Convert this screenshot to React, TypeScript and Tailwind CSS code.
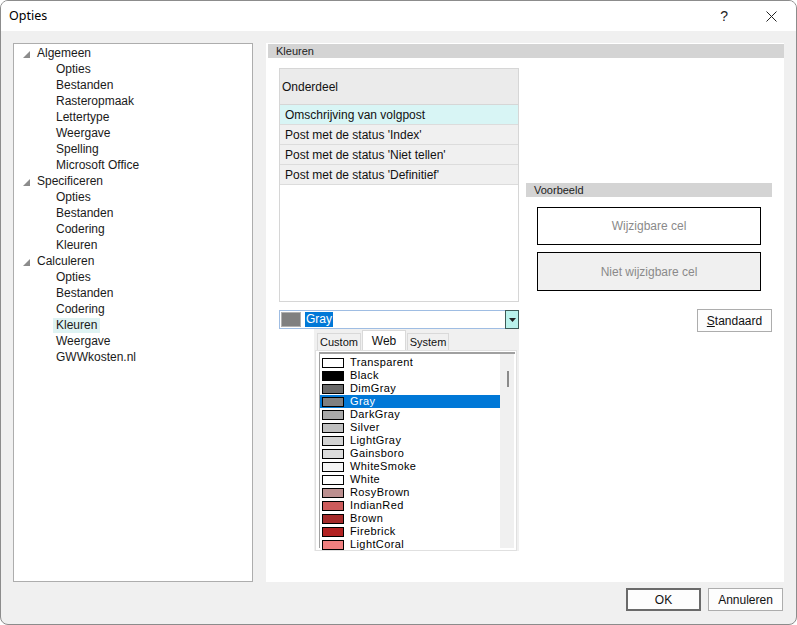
import React from 'react'

type TreeItem = { label: string; level: 0 | 1; selected?: boolean }

const TREE: TreeItem[] = [
  { label: 'Algemeen', level: 0 },
  { label: 'Opties', level: 1 },
  { label: 'Bestanden', level: 1 },
  { label: 'Rasteropmaak', level: 1 },
  { label: 'Lettertype', level: 1 },
  { label: 'Weergave', level: 1 },
  { label: 'Spelling', level: 1 },
  { label: 'Microsoft Office', level: 1 },
  { label: 'Specificeren', level: 0 },
  { label: 'Opties', level: 1 },
  { label: 'Bestanden', level: 1 },
  { label: 'Codering', level: 1 },
  { label: 'Kleuren', level: 1 },
  { label: 'Calculeren', level: 0 },
  { label: 'Opties', level: 1 },
  { label: 'Bestanden', level: 1 },
  { label: 'Codering', level: 1 },
  { label: 'Kleuren', level: 1, selected: true },
  { label: 'Weergave', level: 1 },
  { label: 'GWWkosten.nl', level: 1 },
]

const ROWS = [
  "Omschrijving van volgpost",
  "Post met de status 'Index'",
  "Post met de status 'Niet tellen'",
  "Post met de status 'Definitief'",
]

const COLORS: { name: string; hex: string }[] = [
  { name: 'Transparent', hex: '#ffffff' },
  { name: 'Black', hex: '#000000' },
  { name: 'DimGray', hex: '#696969' },
  { name: 'Gray', hex: '#808080' },
  { name: 'DarkGray', hex: '#a9a9a9' },
  { name: 'Silver', hex: '#c0c0c0' },
  { name: 'LightGray', hex: '#d3d3d3' },
  { name: 'Gainsboro', hex: '#dcdcdc' },
  { name: 'WhiteSmoke', hex: '#f5f5f5' },
  { name: 'White', hex: '#ffffff' },
  { name: 'RosyBrown', hex: '#bc8f8f' },
  { name: 'IndianRed', hex: '#cd5c5c' },
  { name: 'Brown', hex: '#a52a2a' },
  { name: 'Firebrick', hex: '#b22222' },
  { name: 'LightCoral', hex: '#f08080' },
]

function Tree() {
  return (
    <div className="w-[240px] h-[539px] bg-white border border-[#adadad] pt-[1px]">
      {TREE.map((item, i) => (
        <div key={i} className="h-[16px] flex items-center">
          {item.level === 0 ? (
            <>
              <svg width="7" height="7" viewBox="0 0 7 7" className="ml-[9px] mt-[2px]">
                <path d="M7 0 L7 7 L0 7 Z" fill="#8c8c8c" />
              </svg>
              <span className="ml-[7px] text-[12px] text-[#1a1a1a]">{item.label}</span>
            </>
          ) : (
            <span
              className={`ml-[39px] px-[3px] leading-[15px] text-[12px] text-[#1a1a1a] ${
                item.selected ? 'bg-[#dff3f3]' : ''
              }`}
            >
              {item.label}
            </span>
          )}
        </div>
      ))}
    </div>
  )
}

function SectionHeader({ label }: { label: string }) {
  return (
    <div className="h-[14px] bg-[#d4d4d4] pl-[8px] text-[11px] leading-[14px] text-[#222]">
      {label}
    </div>
  )
}

function ColorGrid() {
  return (
    <div className="w-[240px] h-[234px] bg-white border border-[#d6d6d6]">
      <div className="h-[36px] bg-[#ebebeb] border-b border-[#d6d6d6] flex items-center pl-[2px] text-[12px] text-[#111]">
        Onderdeel
      </div>
      {ROWS.map((r, i) => (
        <div
          key={r}
          className={`h-[20px] border-b border-[#dcdcdc] flex items-center pl-[5px] text-[12px] text-[#111] ${
            i === 0 ? 'bg-[#d8f5f5]' : 'bg-[#f0f0f0]'
          }`}
        >
          {r}
        </div>
      ))}
    </div>
  )
}

function ColorCombo() {
  return (
    <div className="mt-[8px] w-[240px] h-[19px] bg-white border border-[#9fbde3] flex items-center">
      <div className="ml-[1px] w-[20px] h-[15px] bg-[#808080] border border-[#b0b0b0]" />
      <span className="ml-[4px] bg-[#0078d7] text-white text-[12px] leading-[15px] px-[1px]">Gray</span>
      <div className="ml-auto w-[14px] h-[19px] -mr-[1px] bg-[#b9f2ec] border border-[#3c5a58] flex items-center justify-center">
        <svg width="7" height="4" viewBox="0 0 7 4">
          <path d="M0 0 L7 0 L3.5 4 Z" fill="#222" />
        </svg>
      </div>
    </div>
  )
}

function ColorPicker() {
  return (
    <div className="ml-[35px] w-[205px] h-[222px] bg-[#f0f0f0] flex flex-col">
      <div className="h-[21px] flex items-end pl-[3px] text-[11px] text-[#111]">
        <div className="w-[44px] h-[17px] border border-b-0 border-[#d9d9d9] flex items-center justify-center">
          Custom
        </div>
        <div className="ml-[1px] w-[44px] h-[20px] bg-white border border-b-0 border-[#d9d9d9] flex items-start justify-center pt-[1px] text-[12px]">
          Web
        </div>
        <div className="ml-[1px] w-[42px] h-[17px] border border-b-0 border-[#d9d9d9] flex items-center justify-center">
          System
        </div>
      </div>
      <div className="ml-[1px] w-[202px] h-[201px] bg-white border border-[#e0e0e0] pt-[1px] pl-[3px]">
        <div className="w-[196px] h-[196px] border-t-2 border-l border-[#a0a0a0] flex">
          <div className="w-[180px] pt-[2px]">
            {COLORS.map((c) => {
              const sel = c.name === 'Gray'
              return (
                <div
                  key={c.name}
                  className={`h-[13px] flex items-center pl-[2px] ${sel ? 'bg-[#0078d7] text-white' : 'text-[#000]'}`}
                >
                  <div className="w-[22px] h-[10px] border border-black" style={{ backgroundColor: c.hex }} />
                  <span className="ml-[6px] text-[11px] tracking-[0.4px] leading-[13px]">{c.name}</span>
                </div>
              )
            })}
          </div>
          <div className="w-[14px] h-full bg-[#f0f0f0] relative">
            <div className="absolute left-[7px] top-[17px] w-[2px] h-[16px] bg-[#8a8a8a]" />
          </div>
        </div>
      </div>
    </div>
  )
}

function Button({ children, primary }: { children: React.ReactNode; primary?: boolean }) {
  return (
    <div
      className={`w-[75px] h-[23px] flex items-center justify-center text-[12px] text-[#111] ${
        primary ? 'bg-[#fdfdfd] border-2 border-[#6a6a6a]' : 'bg-[#fdfdfd] border border-[#adadad]'
      }`}
    >
      {children}
    </div>
  )
}

export default function App() {
  return (
    <div
      className="w-[797px] h-[625px] bg-[#f0f0f0] border border-[#8c8c8c] rounded-[8px] overflow-hidden flex flex-col"
      style={{ fontFamily: '"Liberation Sans", Arial, sans-serif' }}
    >
      <div className="h-[30px] bg-white flex items-center pl-[8px] shrink-0">
        <span className="text-[12.5px] text-black" style={{ fontFamily: '"Noto Sans", sans-serif' }}>Opties</span>
        <span className="ml-auto text-[14px] text-[#222]">?</span>
        <svg width="11" height="11" viewBox="0 0 11 11" className="ml-[38px] mr-[19px]">
          <path d="M0.5 0.5 L10.5 10.5 M10.5 0.5 L0.5 10.5" stroke="#222" strokeWidth="1" />
        </svg>
      </div>

      <div className="flex pl-[12px] pt-[12px] gap-[13px]">
        <Tree />
        <div className="w-[518px] h-[539px] bg-white pt-[1px] pl-[2px]">
          <SectionHeader label="Kleuren" />
          <div className="flex pt-[10px] pl-[11px]">
            <div className="flex flex-col">
              <ColorGrid />
              <ColorCombo />
              <ColorPicker />
            </div>
            <div className="ml-[7px] w-[246px] pt-[115px] flex flex-col">
              <SectionHeader label="Voorbeeld" />
              <div className="mt-[10px] ml-[11px] w-[224px] h-[38px] bg-white border border-black flex items-center justify-center text-[12px] text-[#8a8a8a]">
                Wijzigbare cel
              </div>
              <div className="mt-[7px] ml-[11px] w-[224px] h-[39px] bg-[#f0f0f0] border border-black flex items-center justify-center text-[12px] text-[#8a8a8a]">
                Niet wijzigbare cel
              </div>
              <div className="mt-[18px] self-end">
                <Button>
                  <span><span className="underline">S</span>tandaard</span>
                </Button>
              </div>
            </div>
          </div>
        </div>
      </div>

      <div className="flex justify-end gap-[7px] pr-[13px] pt-[6px]">
        <Button primary>OK</Button>
        <Button>Annuleren</Button>
      </div>
    </div>
  )
}
